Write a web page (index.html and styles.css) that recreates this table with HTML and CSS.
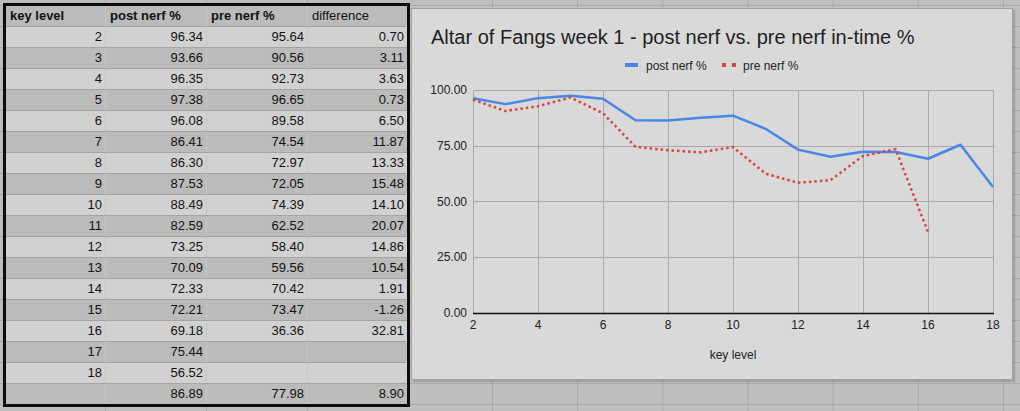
FILE: index.html
```html
<!DOCTYPE html>
<html>
<head>
<meta charset="utf-8">
<link rel="stylesheet" href="styles.css">
</head>
<body>
<div class="sheet">
  <div class="table-area">
    <div class="tbl">
      <div class="row dark head"><div class="cell b">key level</div><div class="cell b">post nerf %</div><div class="cell b">pre nerf %</div><div class="cell">difference</div></div>
      <div class="row light"><div class="cell">2</div><div class="cell">96.34</div><div class="cell">95.64</div><div class="cell">0.70</div></div>
      <div class="row dark"><div class="cell">3</div><div class="cell">93.66</div><div class="cell">90.56</div><div class="cell">3.11</div></div>
      <div class="row light"><div class="cell">4</div><div class="cell">96.35</div><div class="cell">92.73</div><div class="cell">3.63</div></div>
      <div class="row dark"><div class="cell">5</div><div class="cell">97.38</div><div class="cell">96.65</div><div class="cell">0.73</div></div>
      <div class="row light"><div class="cell">6</div><div class="cell">96.08</div><div class="cell">89.58</div><div class="cell">6.50</div></div>
      <div class="row dark"><div class="cell">7</div><div class="cell">86.41</div><div class="cell">74.54</div><div class="cell">11.87</div></div>
      <div class="row light"><div class="cell">8</div><div class="cell">86.30</div><div class="cell">72.97</div><div class="cell">13.33</div></div>
      <div class="row dark"><div class="cell">9</div><div class="cell">87.53</div><div class="cell">72.05</div><div class="cell">15.48</div></div>
      <div class="row light"><div class="cell">10</div><div class="cell">88.49</div><div class="cell">74.39</div><div class="cell">14.10</div></div>
      <div class="row dark"><div class="cell">11</div><div class="cell">82.59</div><div class="cell">62.52</div><div class="cell">20.07</div></div>
      <div class="row light"><div class="cell">12</div><div class="cell">73.25</div><div class="cell">58.40</div><div class="cell">14.86</div></div>
      <div class="row dark"><div class="cell">13</div><div class="cell">70.09</div><div class="cell">59.56</div><div class="cell">10.54</div></div>
      <div class="row light"><div class="cell">14</div><div class="cell">72.33</div><div class="cell">70.42</div><div class="cell">1.91</div></div>
      <div class="row dark"><div class="cell">15</div><div class="cell">72.21</div><div class="cell">73.47</div><div class="cell">-1.26</div></div>
      <div class="row light"><div class="cell">16</div><div class="cell">69.18</div><div class="cell">36.36</div><div class="cell">32.81</div></div>
      <div class="row dark"><div class="cell">17</div><div class="cell">75.44</div><div class="cell"></div><div class="cell"></div></div>
      <div class="row light"><div class="cell">18</div><div class="cell">56.52</div><div class="cell"></div><div class="cell"></div></div>
      <div class="row dark"><div class="cell"></div><div class="cell">86.89</div><div class="cell">77.98</div><div class="cell">8.90</div></div>
    </div>
  </div>
  <div class="canvas">
    <div class="chart">
      <svg class="plot" width="600" height="370" viewBox="412 9 600 370" xmlns="http://www.w3.org/2000/svg">
        <text class="title" x="431" y="44">Altar of Fangs week 1 - post nerf vs. pre nerf in-time %</text>
        <rect x="625" y="63" width="13" height="4" fill="#4a86e8"/>
        <text class="lg" x="646" y="70">post nerf %</text>
        <rect x="722" y="63" width="4" height="4" fill="#d9463a"/>
        <rect x="732" y="63" width="4" height="4" fill="#d9463a"/>
        <text class="lg" x="743" y="70">pre nerf %</text>
        <g class="grid">
          <line x1="473" y1="90.5" x2="993" y2="90.5"/>
          <line x1="473" y1="146.5" x2="993" y2="146.5"/>
          <line x1="473" y1="201.5" x2="993" y2="201.5"/>
          <line x1="473" y1="257.5" x2="993" y2="257.5"/>
          <line x1="538.5" y1="90" x2="538.5" y2="313"/>
          <line x1="603.5" y1="90" x2="603.5" y2="313"/>
          <line x1="668.5" y1="90" x2="668.5" y2="313"/>
          <line x1="733.5" y1="90" x2="733.5" y2="313"/>
          <line x1="798.5" y1="90" x2="798.5" y2="313"/>
          <line x1="863.5" y1="90" x2="863.5" y2="313"/>
          <line x1="928.5" y1="90" x2="928.5" y2="313"/>
          <line x1="993.5" y1="90" x2="993.5" y2="313"/>
          <line x1="473.5" y1="90" x2="473.5" y2="313"/>
        </g>
        <line class="axis" x1="473" y1="313.5" x2="994" y2="313.5"/>
        <polyline class="post" points="473,98.16 505.5,104.14 538,98.14 570.5,95.84 603,98.74 635.5,120.31 668,120.55 700.5,117.81 733,115.67 765.5,128.82 798,149.65 830.5,156.7 863,151.7 895.5,151.97 928,158.73 960.5,144.77 993,186.96"/>
        <polyline class="pre" points="473,99.72 505.5,111.05 538,106.21 570.5,97.47 603,113.24 635.5,146.78 668,150.28 700.5,152.33 733,147.11 765.5,173.58 798,182.77 830.5,180.18 863,155.96 895.5,149.16 928,231.92"/>
        <g class="ylab">
          <text x="467" y="94">100.00</text>
          <text x="467" y="150">75.00</text>
          <text x="467" y="205.5">50.00</text>
          <text x="467" y="261">25.00</text>
          <text x="467" y="317">0.00</text>
        </g>
        <g class="xlab">
          <text x="473" y="329">2</text>
          <text x="538" y="329">4</text>
          <text x="603" y="329">6</text>
          <text x="668" y="329">8</text>
          <text x="733" y="329">10</text>
          <text x="798" y="329">12</text>
          <text x="863" y="329">14</text>
          <text x="928" y="329">16</text>
          <text x="993" y="329">18</text>
        </g>
        <text class="xtitle" x="733" y="359">key level</text>
      </svg>
    </div>
  </div>
</div>
</body>
</html>
```

FILE: styles.css
```css
html, body {
  margin: 0;
  padding: 0;
}

body {
  width: 1020px;
  height: 411px;
  overflow: hidden;
  background: #bebebe;
  font-family: "Liberation Sans", Arial, sans-serif;
  color: #111;
}

.sheet {
  display: flex;
  height: 411px;
  background:
    linear-gradient(to bottom, transparent 20px, #a9a9a9 20px) 0 -15px / 100% 21px repeat;
}

.table-area {
  padding: 3px 0 0 3px;
  background:
    linear-gradient(#a9a9a9, #a9a9a9) 105px 0 / 1px 100% no-repeat,
    linear-gradient(#a9a9a9, #a9a9a9) 206px 0 / 1px 100% no-repeat,
    linear-gradient(#a9a9a9, #a9a9a9) 307px 0 / 1px 100% no-repeat;
}

.tbl {
  border: 3px solid #0c0c0c;
  width: 401px;
  display: flex;
  flex-direction: column;
}

.row {
  display: grid;
  grid-template-columns: 100px 101px 101px 99px;
  height: 21px;
  box-sizing: border-box;
  border-bottom: 1px solid #a4a4a4;
}

.row:last-child {
  height: 20px;
  border-bottom: none;
}

.row.light {
  background: #d1d1d1;
}

.row.dark {
  background: #bbbbbb;
}

.cell {
  box-sizing: border-box;
  border-right: 1px solid #c6c6c6;
  padding: 0 3px 0 4px;
  font-size: 13px;
  line-height: 20px;
  text-align: right;
  white-space: nowrap;
  overflow: hidden;
}

.cell:last-child {
  border-right: none;
}

.head .cell {
  text-align: left;
}

.cell.b {
  font-weight: bold;
}

.canvas {
  flex: 1;
  position: relative;
  background:
    linear-gradient(to right, transparent 84.17px, #a9a9a9 84.17px) -2.17px 0 / 85.17px 100% repeat-x;
}

.chart {
  position: absolute;
  left: 1px;
  top: 8px;
  width: 600px;
  height: 370px;
  background: #d9d9d9;
  border: 1px solid #a3a3a3;
  box-shadow: 2px 2px 1px rgba(0, 0, 0, 0.14);
}

.plot {
  display: block;
  font-family: "Liberation Sans", Arial, sans-serif;
}

.plot .title {
  font-size: 20px;
  fill: #1f1f1f;
}

.plot .lg {
  font-size: 12px;
  fill: #222;
}

.plot .grid line {
  stroke: #a9a9a9;
  stroke-width: 1;
  shape-rendering: crispEdges;
}

.plot .axis {
  stroke: #111;
  stroke-width: 1.5;
}

.plot .post {
  fill: none;
  stroke: #4a86e8;
  stroke-width: 2.5;
  stroke-linejoin: round;
}

.plot .pre {
  fill: none;
  stroke: #d9463a;
  stroke-width: 2.5;
  stroke-dasharray: 2.5 3;
}

.plot .ylab text {
  font-size: 12px;
  fill: #222;
  text-anchor: end;
}

.plot .xlab text {
  font-size: 12px;
  fill: #222;
  text-anchor: middle;
}

.plot .xtitle {
  font-size: 12px;
  fill: #222;
  text-anchor: middle;
}
```
